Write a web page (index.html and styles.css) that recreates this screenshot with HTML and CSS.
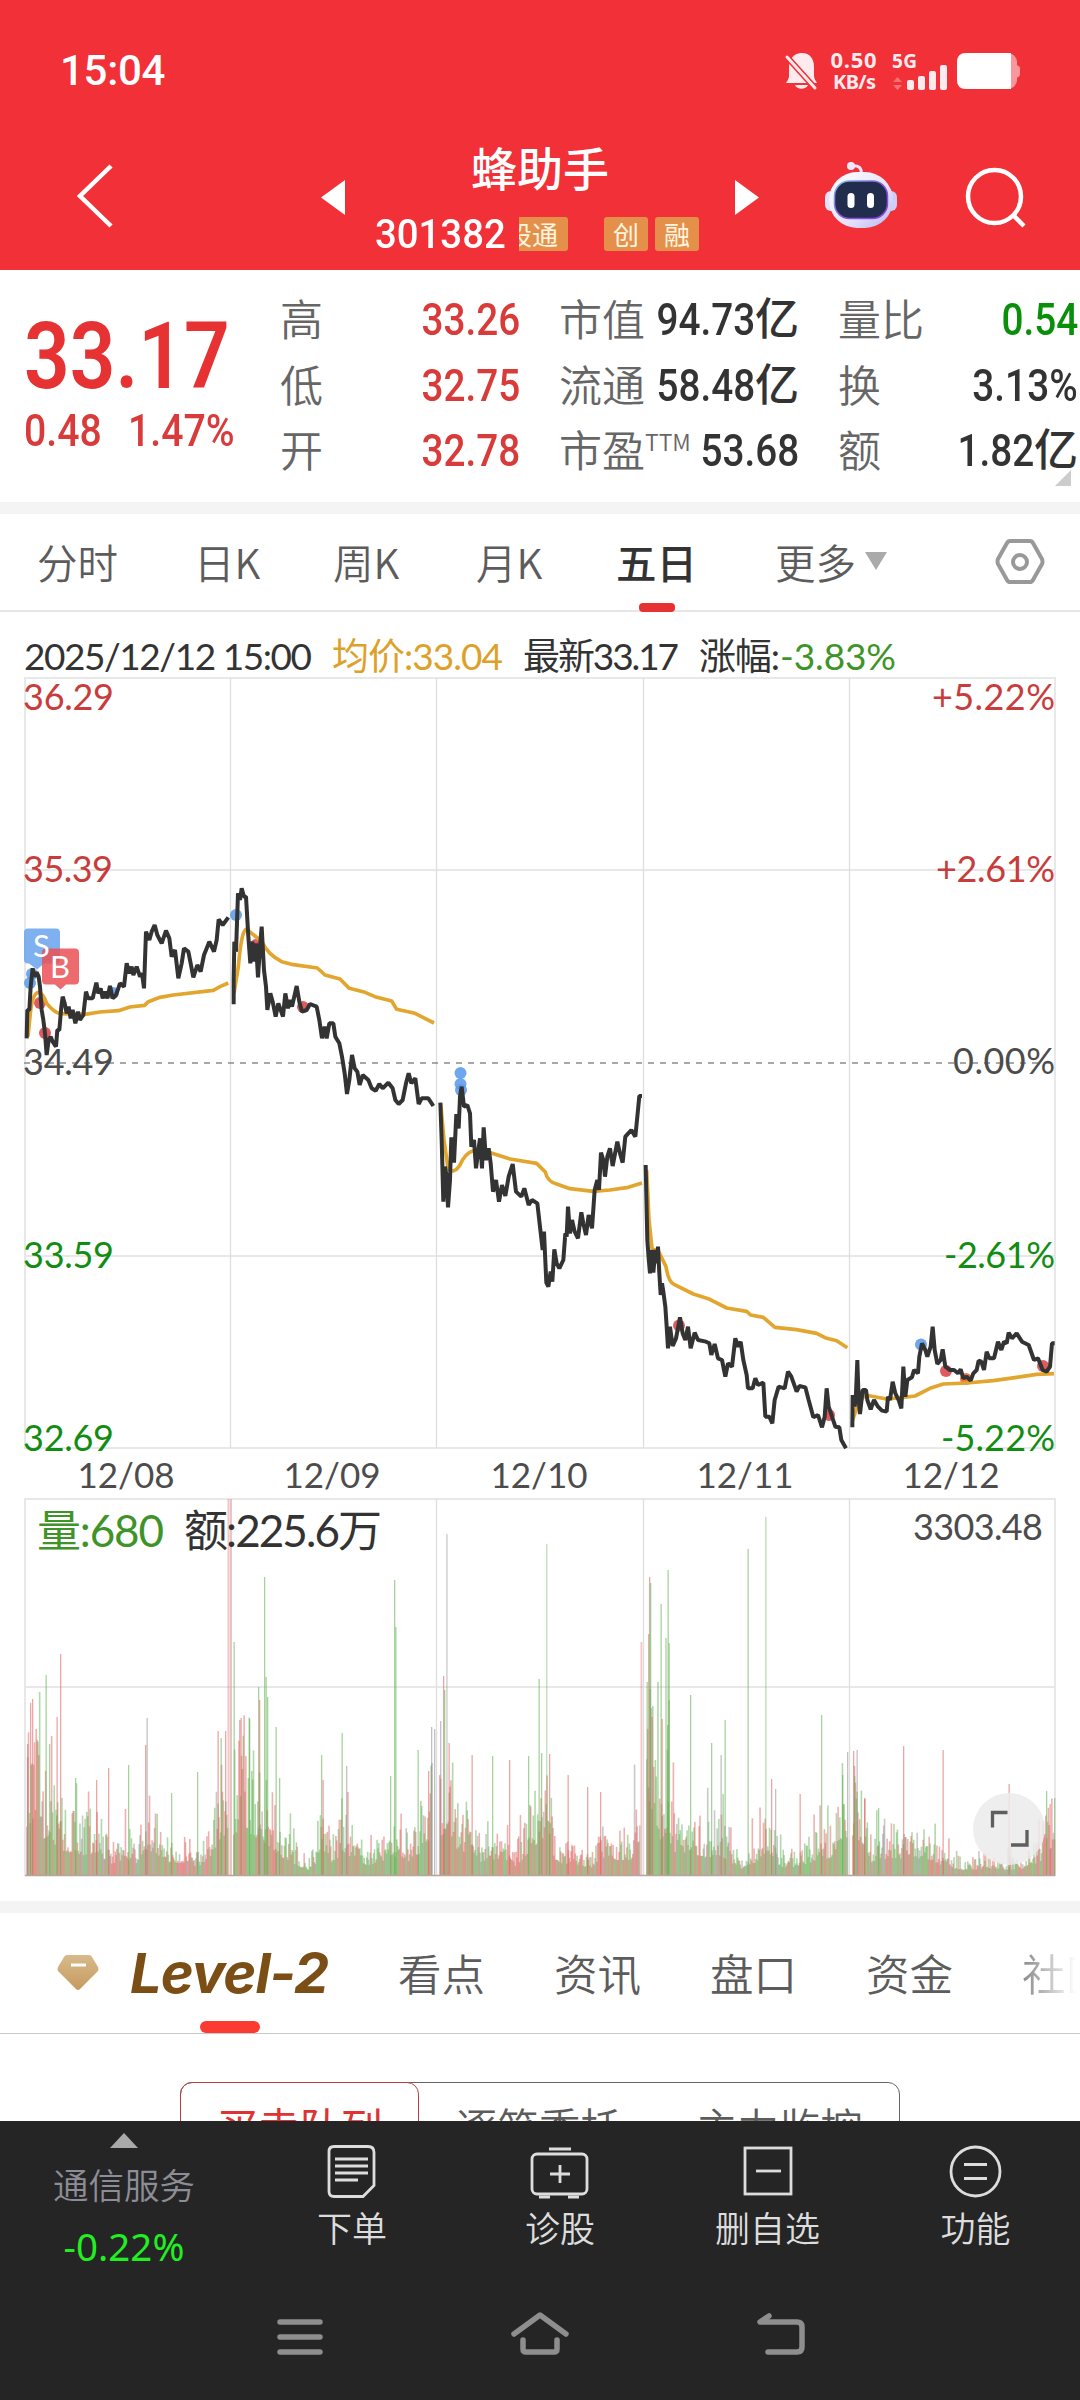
FILE: index.html
```html
<!DOCTYPE html>
<html lang="zh-CN">
<head>
<meta charset="utf-8">
<title>蜂助手 301382</title>
<link rel="stylesheet" href="styles.css">
</head>
<body>
<header class="header">
  <div class="status">
    <span class="clock">15:04</span>
    <svg class="status-icons" viewBox="780 40 260 60" width="260" height="60">
      <g fill="#ffebee">
        <path d="M802 53c-8 0-13 6-13 14v9c0 3-2 5-3 7h31c-1-2-3-4-3-7v-9c0-8-4-14-12-14zM795 85h13c-2 5-11 5-13 0z"/>
        <path d="M787 57l28 31" stroke="#f23037" stroke-width="6"/>
        <path d="M787 57l28 31" stroke="#ffebee" stroke-width="3" stroke-linecap="round"/>
        <text x="830.5" y="68" class="st-a" textLength="46">0.50</text>
        <text x="833" y="89" class="st-b" textLength="43">KB/s</text>
        <text x="892" y="68" class="st-c" textLength="25">5G</text>
        <path d="M893 82l4.500-5 4.500 5zM893 85l4.500 5 4.500-5z" opacity=".35"/>
        <rect x="907" y="80" width="7" height="10" rx="2"/><rect x="918" y="76" width="7" height="14" rx="2"/>
        <rect x="929" y="71" width="7" height="19" rx="2"/><rect x="940" y="65" width="7" height="25" rx="2"/>
      </g>
      <rect x="957" y="53" width="60" height="36" rx="9" fill="#f9979b"/>
      <path d="M1016 65q4 1 4 3v6q0 3-4 4z" fill="#f9979b"/>
      <path d="M1011 53h-45q-9 0-9 9v18q0 9 9 9h45z" fill="#fff"/>
    </svg>
  </div>
  <div class="nav">
    <svg width="42" height="70" viewBox="74 160 42 70" class="back"><path d="M111 166L80 196l31 30" fill="none" stroke="#fff" stroke-width="4.500"/></svg>
    <svg width="26" height="40" class="prev"><path d="M25 2v35L1 19.500z" fill="#fff"/></svg>
    <div class="title">
      <div class="name">蜂助手</div>
      <div class="code-row"><span class="code">301382</span><span class="tag tag-cut"><b>股通</b></span><span class="tag">创</span><span class="tag">融</span></div>
    </div>
    <svg width="26" height="40" class="next"><path d="M1 2v35l24-17.500z" fill="#fff"/></svg>
    <svg class="robot" width="76" height="70" viewBox="822 160 76 70">
      <defs><linearGradient id="shell" x1="0" y1="0" x2="1" y2="1"><stop offset="0" stop-color="#fff"/><stop offset=".6" stop-color="#e6e2fb"/><stop offset="1" stop-color="#b7b5ee"/></linearGradient>
      <linearGradient id="rim" x1="0" y1="0" x2="1" y2="1"><stop offset="0" stop-color="#7fc4e8"/><stop offset=".5" stop-color="#8457dd"/><stop offset="1" stop-color="#8d3fe0"/></linearGradient></defs>
      <path d="M850 166q13-2 11 9" fill="none" stroke="#ebe4fb" stroke-width="3"/><circle cx="851" cy="166" r="4" fill="#efe9fd"/>
      <rect x="825" y="191" width="12" height="20" rx="6" fill="#e2e0fa"/><rect x="885" y="191" width="12" height="20" rx="6" fill="#cfccf7"/>
      <rect x="829" y="172" width="64" height="56" rx="28" fill="url(#shell)"/>
      <rect x="834.500" y="181" width="53" height="37.500" rx="15" fill="#222c4d" stroke="url(#rim)" stroke-width="1.500"/>
      <rect x="847.500" y="193" width="7" height="15" rx="3.500" fill="#fff"/><rect x="867" y="193" width="7" height="15" rx="3.500" fill="#fff"/>
    </svg>
    <svg class="search" width="66" height="66" viewBox="962 164 66 66"><g fill="none" stroke="#fff" stroke-width="4.500"><circle cx="994.500" cy="196.500" r="26.500"/><path d="M1014 216l10 10"/></g></svg>
  </div>
</header>

<section class="quote">
  <div class="last">
    <div class="price"><i class="din">33.17</i></div>
    <div class="delta"><i class="din">0.48</i><i class="din">1.47%</i></div>
  </div>
  <dl>
    <dt>高</dt><dd class="up"><i class="din">33.26</i></dd>
    <dt>低</dt><dd class="up"><i class="din">32.75</i></dd>
    <dt>开</dt><dd class="up"><i class="din">32.78</i></dd>
  </dl>
  <dl>
    <dt>市值</dt><dd><i class="din">94.73</i>亿</dd>
    <dt>流通</dt><dd><i class="din">58.48</i>亿</dd>
    <dt>市盈<sup>TTM</sup></dt><dd><i class="din">53.68</i></dd>
  </dl>
  <dl>
    <dt>量比</dt><dd class="down"><i class="din">0.54</i></dd>
    <dt>换</dt><dd><i class="din">3.13%</i></dd>
    <dt>额</dt><dd><i class="din">1.82</i>亿</dd>
  </dl>
  <span class="corner"></span>
</section>

<nav class="periods">
  <span>分时</span><span>日K</span><span>周K</span><span>月K</span><span class="on">五日</span><span class="more">更多<i></i></span>
  <svg width="50" height="48" viewBox="995 538 50 48"><g fill="none" stroke="#999" stroke-width="4"><path d="M1010 541h20q2 0 3 2l9 16q1 3 0 5l-9 16q-1 2-3 2h-20q-2 0-3-2l-9-16q-1-3 0-5l9-16q1-2 3-2z"/><circle cx="1020" cy="562" r="7"/></g></svg>
</nav>

<svg class="chart" width="1080" height="880" viewBox="0 612 1080 880">
  <g class="info">
    <text x="24" y="670" textLength="288">2025/12/12 15:00</text>
    <text x="332" y="670" class="avg-text" textLength="171">均价:33.04</text>
    <text x="523" y="670" textLength="156">最新33.17</text>
    <text x="699" y="670" textLength="81">涨幅:</text><text x="780" y="670" class="fall-text" textLength="116">-3.83%</text>
  </g>
  <g fill="none" stroke="#e8e8e8" stroke-width="2">
    <path d="M24 678H1056M25 678V1448M1055 678V1448M24 870H1056M24 1256H1056M24 1448H1056"/>
    <path d="M230.500 678V1448M436.500 678V1448M643.500 678V1448M849.500 678V1448" stroke="#dedede" stroke-width="1.300"/>
  </g>
  <path d="M24 1063H1056" stroke="#8c8c8c" stroke-width="1.700" stroke-dasharray="6 6"/>
  <g class="axis up-ax"><text x="23" y="710" textLength="91">36.29</text><text x="23" y="882" textLength="90">35.39</text>
    <text x="932" y="710" textLength="123">+5.22%</text><text x="936" y="882" textLength="119">+2.61%</text></g>
  <g id="dots"></g>
  <g transform="translate(0 860) scale(.33333)">
    <path class="avg" d="M84 530L90 470Q96 400 115 397Q128 398 140 430Q160 455 180 461L255 463L300 456L355 452L390 441L434 436L445 425L480 412L520 405L640 391L660 380L685 369"/>
    <path class="px" d="M80 535L82 450L88 450L92 380L98 325L103 350L110 337L116 350L120 380L125 450L130 480L135 520L140 585L146 540L152 530L158 545L168 560L172 510L178 510L184 440L188 410L194 430L200 460L206 440L212 475L218 450L226 490L234 455L240 480L250 465L258 395L264 415L278 415L289 368L295 400L302 385L308 415L315 395L322 415L330 378L338 415L348 405L360 370L372 380L380 310L388 340L395 320L400 345L410 320L420 350L426 340L432 385L438 215L448 240L455 215L464 195L472 225L485 250L498 212L508 235L515 290L525 270L535 355L545 310L552 265L565 275L572 310L580 352L592 315L602 335L612 285L628 245L642 275L650 240L656 178L668 195L685 172"/>
    <path class="avg" d="M702 400L715 320Q725 205 740 207Q752 218 765 228L785 245Q805 285 845 305L880 314L952 324L975 345L1020 357L1048 385L1095 397L1125 410L1175 423L1190 448L1245 460L1302 489"/>
    <path class="px" d="M701 433L701 360L703 245L708 275L714 100L720 120L725 85L732 110L738 110L745 230L751 310L757 245L763 305L768 250L774 352L780 260L785 200L792 330L798 380L802 450L811 400L818 425L827 470L835 430L849 470L856 400L864 445L870 420L876 440L890 378L898 425L906 455L920 450L930 432L950 440L958 480L966 535L974 500L980 535L988 490L1000 490L1006 530L1018 550L1026 590L1034 640L1041 702L1048 660L1056 585L1064 625L1072 635L1079 675L1088 645L1105 660L1115 685L1127 692L1138 672L1148 685L1165 668L1178 685L1186 720L1196 732L1208 720L1218 670L1226 640L1234 670L1246 655L1256 732L1265 715L1285 715L1300 738"/>
  </g>
  <g transform="translate(420 1040) scale(.33333)">
    <path class="avg" d="M62 190L72 300L84 385Q100 405 120 375Q135 340 158 333L195 333L270 357L350 370L376 396Q382 425 410 432L450 446L520 454L570 450L625 442L666 429"/>
    <path class="px" d="M61 188L65 300L70 485L75 380L80 410L84 502L90 420L94 292L102 368L109 222L116 265L120 170L125 140L132 200L142 195L150 220L154 320L162 300L168 385L174 340L180 295L186 385L191 262L198 360L206 325L212 370L219 455L228 420L237 485L246 435L256 468L266 410L278 372L288 455L304 470L313 445L326 495L336 480L352 490L360 560L368 630L372 575L379 728L385 740L392 695L397 725L403 628L410 670L418 685L430 660L436 580L440 590L444 500L450 580L456 540L464 575L474 595L484 517L490 550L498 585L506 525L516 565L524 450L532 420L537 450L543 338L550 360L555 410L562 350L570 325L578 378L592 305L600 340L608 368L616 290L634 270L646 290L652 230L658 168L666 168"/>
  </g>
  <g transform="translate(630 1140) scale(.33333)">
    <path class="avg" d="M50 90L57 240L66 326L86 335L108 380Q115 425 132 433L190 462L235 476L290 504L350 514L362 525L400 532L435 562L500 569L560 580L585 593L620 602L652 623"/>
    <path class="px" d="M47 75L52 300L56 355L60 400L64 330L70 398L76 330L80 370L84 320L88 400L92 465L96 430L100 455L106 500L110 560L114 625L120 560L128 618L138 595L150 532L158 580L166 600L174 560L182 625L194 578L204 600L228 605L238 610L244 645L254 612L264 655L276 660L286 710L294 670L306 680L316 595L324 620L332 605L340 660L350 705L354 745L368 745L376 715L384 735L400 728L406 830L418 830L427 850L434 780L446 740L464 745L474 695L484 710L500 755L508 738L526 742L536 780L550 832L564 825L576 862L584 830L590 745L596 800L606 830L616 860L628 862L634 900L648 925"/>
    <path class="avg" d="M668 840L685 790L705 765L770 777L820 772L855 768L900 745L940 732L1010 729L1090 722L1160 712L1220 703L1272 701"/>
    <path class="px" d="M667 862L668 765L674 800L678 760L682 660L686 780L690 822L698 750L708 750L712 780L722 808L732 780L744 800L756 812L770 815L774 770L780 780L788 725L796 760L806 780L814 805L820 680L826 770L832 720L846 712L852 690L864 700L868 650L876 610L886 630L892 650L902 620L908 560L914 630L922 672L932 660L938 628L946 680L960 690L972 690L984 700L992 688L1000 715L1010 710L1022 722L1030 700L1040 690L1046 662L1054 665L1062 690L1070 635L1078 655L1092 655L1104 605L1114 630L1122 605L1130 610L1136 578L1146 595L1160 580L1176 605L1196 615L1212 660L1224 655L1238 690L1250 695L1260 680L1266 610L1274 610"/>
  </g>
  <path d="M28 928.500h28q4 0 4 4v27q0 4-4 4h-12l-7 6-8-6h-1q-4 0-4-4v-27q0-4 4-4z" fill="#68a3ee" fill-opacity=".85"/>
  <path d="M46 948.500h29q4 0 4 4v28q0 4-4 4h-9l-5.500 5-5.500-5h-9q-4 0-4-4v-28q0-4 4-4z" fill="#ea5055" fill-opacity=".85"/>
  <text x="33" y="957" class="flag">S</text><text x="50" y="978" class="flag">B</text>
  <g class="axis"><text x="23" y="1075" textLength="91">34.49</text><text x="953" y="1074" textLength="102">0.00%</text></g>
  <g class="axis down-ax"><text x="23" y="1268" textLength="91">33.59</text><text x="23" y="1451" textLength="91">32.69</text>
    <text x="944" y="1268" textLength="111">-2.61%</text><text x="941" y="1451" textLength="114">-5.22%</text></g>
  <g class="axis dates"><text x="126" y="1488">12/08</text><text x="332" y="1488">12/09</text><text x="539" y="1488">12/10</text><text x="745" y="1488">12/11</text><text x="951" y="1488">12/12</text></g>
</svg>

<svg class="volume" width="1080" height="409" viewBox="0 1492 1080 409">
  <g fill="none" stroke="#e8e8e8" stroke-width="2">
    <path d="M24 1499H1056M25 1499V1876M1055 1499V1876M24 1687H1056"/>
    <path d="M230.500 1499V1876M436.500 1499V1876M643.500 1499V1876M849.500 1499V1876" stroke="#dedede" stroke-width="1.300"/>
  </g>
  <g id="bars"></g>
  <path d="M25 1875.500H1055" stroke="#b9a49a" stroke-width="1.500"/>
  <g class="vol">
    <text x="37" y="1547" fill="#3f9429" textLength="127">量:680</text><text x="184" y="1547" fill="#333" textLength="198">额:225.6万</text>
  </g>
  <g class="axis"><text x="913" y="1540" textLength="130">3303.48</text></g>
  <circle cx="1009" cy="1829" r="36" fill="#ebebeb" fill-opacity=".85"/>
  <path d="M992.500 1827.500v-15h15M1027 1830v15h-16" fill="none" stroke="#5e5e5e" stroke-width="3.300"/>
</svg>

<section class="tabs">
  <svg width="48" height="46" viewBox="54 1950 48 46"><defs><linearGradient id="gold" x2="0" y2="1"><stop stop-color="#d8ba8b"/><stop offset="1" stop-color="#c59a5e"/></linearGradient></defs><path d="M67 1955h22q2 0 3 2l6 10q1 2 0 4l-18 18q-2 2-4 0l-18-18q-1-2 0-4l6-10q1-2 3-2z" fill="url(#gold)"/><path d="M71 1965h15" stroke="#fff" stroke-width="3"/></svg>
  <div class="level"><i>Level-2</i></div>
  <span>看点</span><span>资讯</span><span>盘口</span><span>资金</span><span class="fade">社区</span>
</section>

<section class="panel">
  <div class="segment"><span class="on">买卖队列</span><span>逐笔委托</span><span>主力监控</span></div>
</section>

<footer class="dock">
  <div class="actions">
    <div class="sector"><i class="tri"></i><span>通信服务</span><b>-0.22%</b></div>
    <div class="act"><svg width="60" height="56" viewBox="323 2143 60 56"><g class="ln"><path d="M335 2146.500h34q6 0 6 6v33l-11 11h-29q-5 0-5-5v-40q0-5 5-5z"/><path d="M336 2159h33M336 2166h33M336 2173h33M336 2180h23"/></g></svg>下单</div>
    <div class="act"><svg width="60" height="56" viewBox="530 2143 60 56"><g class="ln"><rect x="532" y="2154" width="55" height="40" rx="5"/><path d="M549 2149h22M560 2165v18M550 2174h20M539 2197h11M568 2197h11"/></g></svg>诊股</div>
    <div class="act"><svg width="60" height="56" viewBox="737 2143 60 56"><g class="ln"><rect x="744" y="2148" width="46" height="46"/><path d="M755 2171h25"/></g></svg>删自选</div>
    <div class="act"><svg width="60" height="56" viewBox="946 2143 60 56"><g class="ln"><circle cx="975.500" cy="2171.500" r="24.500"/><path d="M964 2164.500h23M964 2178.500h23"/></g></svg>功能</div>
  </div>
  <svg class="sysnav" width="1080" height="90" viewBox="0 2292 1080 90"><g fill="none" stroke="#8e8e8e" stroke-width="5.500" stroke-linecap="round" stroke-linejoin="round">
    <path d="M280 2322h40M280 2337h40M280 2352h40"/>
    <path d="M514 2334l26-19 26 19M523 2340v9q0 3 3 3h28q3 0 3-3v-9"/>
    <path d="M769 2316l-9 6h37q5 0 5 5v20q0 5-5 5h-29"/></g></svg>
</footer>
<script src="chart.js"></script>
</body>
</html>
```
FILE: styles.css
```css
* { box-sizing: border-box; }
body { margin: 0; width: 1080px; height: 2400px; overflow: hidden; background: #fff; color: #333;
  font-family: Lato, "Noto Sans CJK SC", sans-serif; }
i { font-style: normal; }
svg { display: block; flex: none; }

.header { height: 270px; background: #f23037; color: #fff; }
.status { height: 141px; display: flex; justify-content: space-between; padding: 40px 40px 0 60px; }
.clock { font: 500 42px/62px Roboto, sans-serif; letter-spacing: -.3px; }
.st-a, .st-b, .st-c { font-family: "Noto Sans", sans-serif; font-weight: 700; }
.st-a { font-size: 22px; }
.st-b { font-size: 20px; }
.st-c { font-size: 19px; }
.nav { display: grid; grid-template-columns: 320px 50px 342px 110px 140px 118px; height: 129px; align-items: start; }
.back { margin: 19px 0 0 74px; }
.prev, .next { margin-top: 37px; }
.next { margin-left: 22px; }
.title { text-align: center; }
.name { font: 500 46px/58px "Noto Sans CJK SC", sans-serif; margin-top: -4px; padding-right: 2px; }
.code-row { display: flex; align-items: center; height: 36px; margin-top: 21px; padding-left: 5px; }
.code { font: 500 41px/38px Roboto, sans-serif; transform: scaleX(.935); transform-origin: left; width: 144px; text-align: left; }
.tag { width: 44px; height: 34px; margin-right: 7px; border-radius: 3px; background: #e5904a; color: #fff6e0; font: 26px/34px "Noto Sans CJK SC", sans-serif; overflow: hidden; }
.tag-cut { width: 49px; margin-right: 36px; display: flex; justify-content: flex-end; padding-right: 10px; border-radius: 0 3px 3px 0; }
.tag-cut b { font-weight: 400; flex: none; }
.robot { margin: 19px 0 0 0; }
.search { margin: 23px 0 0 0; }

.quote { position: relative; display: grid; grid-template-columns: 217px 240px 240px 241px; column-gap: 39px; height: 232px; padding: 15px 0 0 24px; font-family: Roboto, "Noto Sans CJK SC", sans-serif; }
.quote dl:last-of-type { margin-right: -1px; }
.last { color: #e63232; }
.din { display: inline-block; transform: scaleX(.88); transform-origin: left; font-family: Roboto, sans-serif; font-weight: 500; }
.price { font-size: 92px; line-height: 100px; margin-top: 22px; height: 89px; white-space: nowrap; }
.price .din { font-weight: 600; transform: scaleX(.87); }
.delta { font-size: 44.500px; line-height: 70px; color: #d93a3a; display: flex; }
.delta .din { width: 104px; white-space: nowrap; }
dl { margin: 0; display: grid; grid-template-columns: 80px 160px; grid-template-rows: repeat(3, 65.500px); align-items: center; font-size: 43px; line-height: 65px; white-space: nowrap; }
dt { color: #666; font-weight: 350; font-family: "Noto Sans CJK SC", sans-serif; }
dt sup { font-size: 23px; line-height: 0; vertical-align: 16px; }
dd { margin: 0; padding-top: 3px; height: 65px; display: flex; justify-content: flex-end; font-size: 44px; line-height: 65px; font-weight: 500; }
dd .din { transform-origin: right; }
.up { color: #d93a3a; }
.down { color: #0a8f0a; }
.corner { position: absolute; right: 9px; top: 200px; border: 8.500px solid transparent; border-right-color: #ccc; border-bottom-color: #ccc; }

.periods { height: 110px; border-top: 12px solid #f4f4f4; border-bottom: 2px solid #e6e6e6; display: grid; grid-template-columns: 157px 139px 143px 140px 159px 220px 50px; padding-left: 37px; align-items: center; font: 350 40.500px/95px "Noto Sans CJK SC", sans-serif; color: #5c5c5c; }
.periods span { margin-top: -2px; }
.periods .on { position: relative; color: #333; font-weight: 500; }
.periods .on::after { content: ""; position: absolute; left: 23px; bottom: -3px; width: 36px; height: 9px; border-radius: 4px; background: #e63232; }
.more { display: flex; align-items: center; }
.more i { margin-left: 9px; border: 11px solid transparent; border-top: 18px solid #aaa; border-bottom: 0; }

.info { font-size: 37px; fill: #333; }
.avg-text { fill: #dda12a; }
.fall-text { fill: #3f9429; }
.axis { font-size: 36px; fill: #4c4c4c; }
.up-ax { fill: #c83c3c; }
.down-ax { fill: #128c12; }
.dates { text-anchor: middle; font-size: 35px; }
.flag { font-size: 31px; fill: #fff; }
.vol { font-size: 44px; }
.avg { fill: none; stroke: #e2a62f; stroke-width: 11; stroke-linejoin: round; }
.px { fill: none; stroke: #333; stroke-width: 12; stroke-linejoin: bevel; }

.tabs { height: 133px; border-top: 12px solid #f4f4f4; border-bottom: 1px solid #c8c8c8; display: grid; grid-template-columns: 76px 268px 156px 156px 156px 156px 60px; padding-left: 54px; align-items: center; font: 350 43.500px/120px "Noto Sans CJK SC", sans-serif; color: #5c5c5c; white-space: nowrap; overflow: hidden; }
.level { position: relative; height: 120px; }
.level i { display: inline-block; font: italic 700 55px/120px Inter, sans-serif; color: #7a4e14; letter-spacing: -1px; transform: scaleX(1.02); transform-origin: left; }
.level::after { content: ""; position: absolute; left: 70px; bottom: 0; width: 60px; height: 12px; border-radius: 6px; background: #fb3a32; }
.fade { background: linear-gradient(90deg, #888, #fff 90%); background-clip: text; color: transparent; overflow: hidden; }

.panel { height: 87px; padding: 48px 180px 0; overflow: hidden; }
.segment { height: 80px; display: grid; grid-template-columns: 238px 240px 240px; border: 1.500px solid #666; border-radius: 12px; text-align: center; font: 350 41.500px/86px "Noto Sans CJK SC", sans-serif; color: #5c5c5c; }
.segment .on { margin: -1px 0 0 -1px; border: 1.500px solid #b54040; border-radius: 12px; color: #dd3333; font-weight: 400; }

.dock { height: 279px; background: #252525; color: #ddd; }
.actions { height: 171px; display: grid; grid-template-columns: 248px 208px 208px 207px 209px; text-align: center; font: 350 35px/48px "Noto Sans CJK SC", sans-serif; }
.act { padding-top: 22px; }
.act svg { margin: 0 auto 4px; }
.sector { display: flex; flex-direction: column; align-items: center; color: #8d8d97; font-size: 35.500px; }
.tri { margin: 12px 0 12px; border: 14px solid transparent; border-bottom: 15px solid #aaa; border-top: 0; }
.sector b { font: 400 38.500px/50px "Noto Sans", sans-serif; color: #22ef22; margin-top: 13px; }
.ln { fill: none; stroke: #ddd; stroke-width: 2.800; }
```
FILE: chart.js
```js
const NS = 'http://www.w3.org/2000/svg';
const add = (host, tag, attrs) => {
  const el = document.createElementNS(NS, tag);
  for (const k in attrs) el.setAttribute(k, attrs[k]);
  host.appendChild(el);
};

// trade markers: x, y, colour
const BLUE = '#5b9beb', RED = '#dc4448';
const dots = [
  [32, 974, BLUE], [30, 983, BLUE], [40, 1003, RED], [45, 1033, RED], [113, 993, BLUE],
  [236, 915, BLUE], [256, 945, RED], [303, 1007, RED],
  [460.500, 1073, BLUE], [460.500, 1084, BLUE], [461, 1090, BLUE],
  [679, 1325.500, RED], [829, 1415, RED], [921, 1344.500, BLUE],
  [946, 1371, RED], [966, 1379, '#e8622c'], [1043, 1366, RED]
];
for (const [cx, cy, fill] of dots) add(document.getElementById('dots'), 'circle', { cx, cy, r: 6, fill, 'fill-opacity': .88 });

// volume: typical height and green share along each session
const sessions = [
  { from: 26, to: 227, env: [[26,110],[34,125],[40,75],[50,95],[56,60],[64,55],[78,45],[95,50],[115,22],[124,45],[134,22],[144,60],[155,50],[170,28],[185,30],[197,20],[212,45],[220,85],[227,90]], green: .4, red: .47 },
  { from: 233, to: 432, env: [[233,90],[241,110],[250,90],[262,75],[272,60],[285,35],[308,12],[316,30],[320,70],[330,30],[344,50],[352,40],[365,20],[380,35],[390,30],[398,50],[410,25],[422,60],[432,90]], green: .56, red: .37 },
  { from: 439, to: 639, env: [[439,80],[447,110],[458,50],[470,60],[480,30],[500,40],[512,15],[540,80],[548,70],[556,30],[575,22],[590,15],[602,40],[615,35],[630,35],[639,80]], green: .42, red: .5 },
  { from: 646, to: 846, env: [[646,140],[653,120],[660,80],[668,80],[675,50],[690,50],[705,40],[720,45],[740,15],[755,30],[766,55],[780,20],[800,20],[815,35],[832,40],[840,80],[846,85]], green: .55, red: .33 },
  { from: 852, to: 1054, env: [[852,90],[860,75],[870,30],[890,40],[905,35],[925,40],[945,18],[970,12],[985,18],[1000,14],[1020,14],[1040,30],[1048,60],[1054,60]], green: .42, red: .48 }
];
const G = '#5cae4d', R = '#dc5c5a', K = '#8e8e8e';
const bars = document.getElementById('bars');
const BASE = 1876;
let seed = 41;
const rnd = () => (seed = (seed * 16807) % 2147483647) / 2147483647;
const level = (env, x) => {
  for (let i = 1; i < env.length; i++) if (x <= env[i][0]) {
    const [a, b] = [env[i - 1], env[i]];
    return a[1] + (b[1] - a[1]) * (x - a[0]) / (b[0] - a[0]);
  }
  return env[env.length - 1][1];
};
const bar = (x, h, fill, w = 1.600, o = .48) => add(bars, 'rect', { x: x.toFixed(2), y: (BASE - h).toFixed(1), width: w, height: h.toFixed(1), fill, 'fill-opacity': o });
for (const s of sessions) {
  for (let x = s.from; x < s.to; x += .858) {
    const r = rnd();
    let h = level(s.env, x) * (.45 + .95 * r * r);
    if (rnd() > .88) h *= 1.6;
    const c = rnd();
    bar(x, h, c < s.green ? G : c < s.green + s.red ? R : K);
  }
}
// single large minutes: x, top, colour
const peaks = [
  [27,1744,R],[30,1703,R],[32,1699,R],[45.500,1675,G],[49,1744,G],[56.500,1717,R],[60,1654,R],[75,1778,G],[96,1780,R],[108,1768,R],[128,1765,G],[145,1745,R],[146.500,1718,K],
  [171,1793,G],[197,1772,G],[217.500,1731,R],[220.500,1738,G],[225,1731,R],[227.500,1499,R,2],[230.500,1499,R,1.500],
  [233.500,1642,G],[240.500,1718,R],[249,1719,G],[258,1687,G],[259,1700,R],[264,1577,G],[265.500,1677,G],[267,1697,G],[275.500,1727,G],[279,1778,G],[321,1755,G],[322.500,1780,R],[341.500,1733,G],[346,1766,K],[390,1776,G],[394,1580,G],[395.200,1627,G],[417.500,1750,G],[428,1771,R],[431,1727,K],[434,1729,K],
  [440,1721,K],[443,1676,R],[444,1690,G],[446,1534,K,1.800],[448.500,1743,R],[471.500,1755,R],[492,1756,G],[509,1760,R],[528,1756,G],[538.500,1679,G],
  [541,1753,G],[546,1544,G,1.500],[549,1754,R],[567.500,1775,R],[587,1787,R],[600,1792,R],[640.500,1642,R,1.800],
  [646.500,1682,G],[648,1634,G],[649,1577,R],[650,1583,G],[651.500,1717,R],[660.500,1604,G],[661.500,1719,R],[665,1638,G,2],[667.500,1570,G],[668.500,1643,G],[667,1725,G],[690,1695,G],[711,1743,G],[720.500,1755,K],[724.500,1720,G],[747.500,1549,G],[765,1517,G,1.600],[771,1779,R],[775,1789,K],[799.500,1794,R],[821,1715,G],[842,1775,G],[847,1752,K],
  [853,1751,R],[854,1776,G],[856.500,1750,K],[864,1799,R],[903,1746,R],[942.500,1750,R],[878,1808,G],[1008.500,1784,R],[1046,1791,G],[1049.500,1804,R],[1054,1798,G]
];
for (const [x, y, c, w] of peaks) bar(x, BASE - y, c, w || 1.300, w ? .35 : .55);
```
